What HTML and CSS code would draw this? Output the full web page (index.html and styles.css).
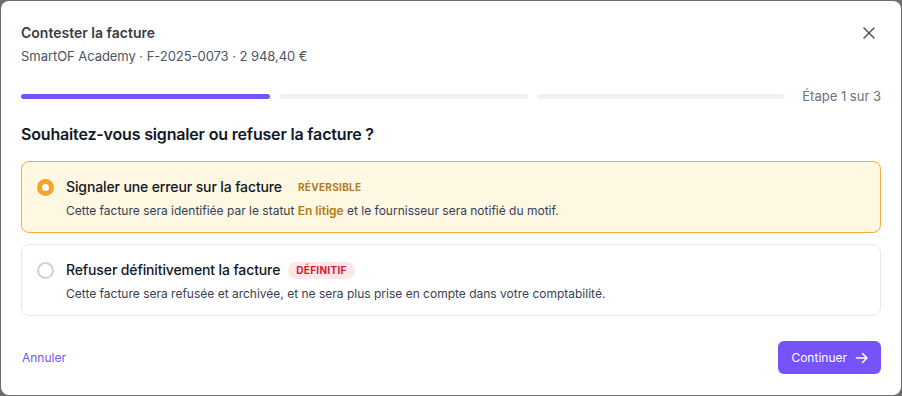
FILE: index.html
```html
<!DOCTYPE html>
<html lang="fr">
  <head>
    <meta charset="UTF-8" />
    <meta name="viewport" content="width=device-width, initial-scale=1.0" />
    <title>Contester la facture</title>
    <link rel="stylesheet" href="styles.css">
  </head>
  <body>
    <div class="modal">
      <div class="modal-header">
        <div>
          <div class="modal-title">Contester la facture</div>
          <div class="modal-subtitle">SmartOF Academy · F-2025-0073 · 2 948,40 €</div>
        </div>
        <button class="close-btn" aria-label="Fermer">
          <svg width="14" height="14" viewBox="0 0 14 14" fill="none" stroke="currentColor" stroke-width="1.5" stroke-linecap="round">
            <path d="M2 2 L12 12 M12 2 L2 12" />
          </svg>
        </button>
      </div>

      <div class="progress">
        <div class="bar active"></div>
        <div class="bar"></div>
        <div class="bar"></div>
        <div class="step-label">Étape 1 sur 3</div>
      </div>

      <h2 class="question">Souhaitez-vous signaler ou refuser la facture ?</h2>

      <div class="options">
        <div class="option selected">
          <span class="radio"></span>
          <div class="option-body">
            <div class="option-title">
              Signaler une erreur sur la facture
              <span class="badge badge-warn">Réversible</span>
            </div>
            <div class="option-desc">
              Cette facture sera identifiée par le statut <strong>En litige</strong> et le fournisseur sera notifié du motif.
            </div>
          </div>
        </div>

        <div class="option">
          <span class="radio"></span>
          <div class="option-body">
            <div class="option-title">
              Refuser définitivement la facture
              <span class="badge badge-danger">Définitif</span>
            </div>
            <div class="option-desc">
              Cette facture sera refusée et archivée, et ne sera plus prise en compte dans votre comptabilité.
            </div>
          </div>
        </div>
      </div>

      <div class="modal-footer">
        <a href="#" class="cancel-link">Annuler</a>
        <button class="primary-btn">
          Continuer
          <svg width="14" height="14" viewBox="0 0 14 14" fill="none" stroke="currentColor" stroke-width="1.5" stroke-linecap="round" stroke-linejoin="round">
            <path d="M1.5 7 H12 M7.5 2.5 L12 7 L7.5 11.5" />
          </svg>
        </button>
      </div>
    </div>
  </body>
</html>
```

FILE: styles.css
```css
* {
  box-sizing: border-box;
}

body {
  margin: 0;
  padding: 1px;
  background: #6e6e6e;
  font-family: Inter, "Noto Sans", sans-serif;
  color: #111827;
}

.modal {
  background: white;
  border-radius: 8px;
  height: 394px;
  padding: 22px 20px 0 20px;
  display: flex;
  flex-direction: column;
}

.modal-header {
  display: flex;
  justify-content: space-between;
  align-items: flex-start;
}

.modal-title {
  font-size: 14px;
  line-height: 20px;
  font-weight: 600;
  color: #3a3d45;
}

.modal-subtitle {
  margin-top: 3px;
  font-size: 13px;
  line-height: 20px;
  letter-spacing: -0.05px;
  color: #4b5563;
}

.close-btn {
  margin-top: 3px;
  margin-right: 5px;
  padding: 0;
  border: none;
  background: none;
  color: #4b5563;
  cursor: pointer;
  display: flex;
}

.progress {
  margin-top: 20px;
  display: flex;
  align-items: center;
  gap: 9px;
  height: 20px;
}

.bar {
  flex: 1;
  height: 5px;
  border-radius: 3px;
  background: #f0f1f5;
}

.bar.active {
  background: #7552fa;
}

.step-label {
  margin-left: 8px;
  font-size: 13px;
  color: #6b7280;
  white-space: nowrap;
}

.question {
  margin: 16px 0 0 0;
  font-size: 16px;
  line-height: 24px;
  font-weight: 600;
  letter-spacing: -0.17px;
  color: #111827;
}

.options {
  margin-top: 15px;
  display: flex;
  flex-direction: column;
  gap: 11px;
}

.option {
  display: flex;
  align-items: flex-start;
  gap: 12px;
  height: 72px;
  padding: 15px 15px 0 15px;
  border: 1px solid #e6e7eb;
  border-radius: 8px;
  background: white;
}

.option.selected {
  background: #fef7e2;
  border-color: #f1ae3f;
}

.radio {
  flex: none;
  width: 17px;
  height: 17px;
  margin-top: 2px;
  border-radius: 50%;
  border: 2px solid #cdd2db;
  background: white;
}

.option.selected .radio {
  border: 5px solid #f5a524;
}

.option-title {
  display: flex;
  align-items: center;
  gap: 8px;
  font-size: 14px;
  line-height: 20px;
  font-weight: 500;
  letter-spacing: -0.12px;
  color: #111827;
}

.badge {
  padding: 0 8px;
  height: 17px;
  line-height: 17px;
  border-radius: 9px;
  font-size: 10px;
  font-weight: 700;
  letter-spacing: 0.3px;
  text-transform: uppercase;
}

.badge-warn {
  color: #b27d1c;
}

.badge-danger {
  background: #fde7ea;
  color: #d8192e;
}

.option-desc {
  margin-top: 5px;
  font-size: 12px;
  line-height: 18px;
  color: #374151;
}

.option-desc strong {
  color: #b5791c;
  font-weight: 600;
}

.modal-footer {
  margin-top: auto;
  margin-bottom: 21px;
  display: flex;
  justify-content: space-between;
  align-items: center;
}

.cancel-link {
  margin-left: 1px;
  font-size: 12px;
  color: #7552fa;
  text-decoration: none;
}

.primary-btn {
  display: flex;
  align-items: center;
  gap: 8px;
  height: 33px;
  padding: 0 12px 0 13px;
  border: none;
  border-radius: 6px;
  background: #7552fa;
  color: white;
  font-family: inherit;
  font-size: 12px;
  cursor: pointer;
}
```
